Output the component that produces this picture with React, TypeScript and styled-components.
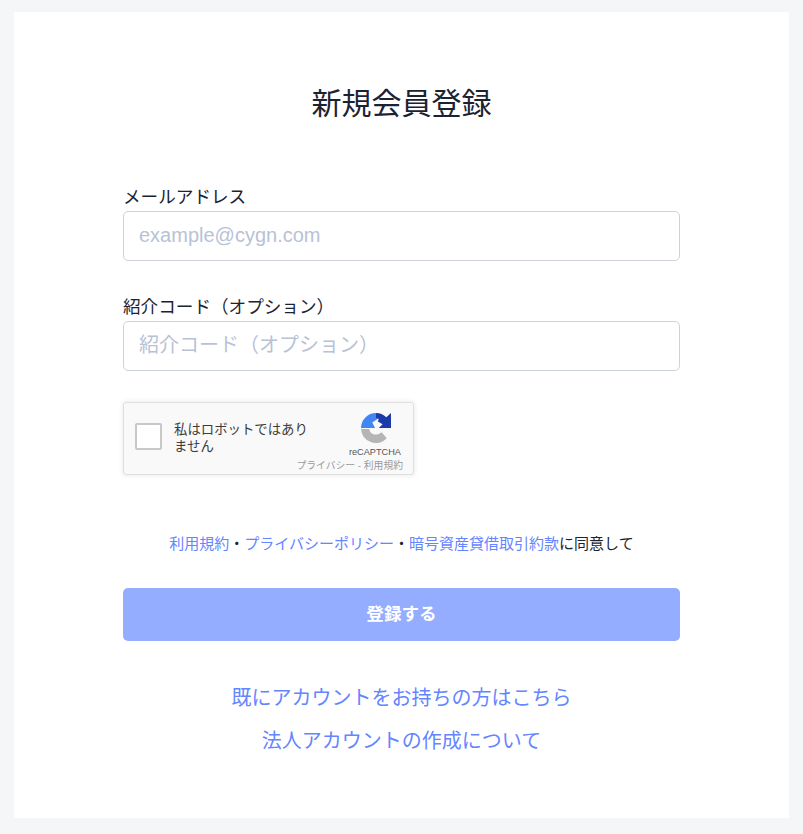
import styled, { createGlobalStyle } from "styled-components";

const GlobalStyle = createGlobalStyle`
  html, body {
    margin: 0;
    padding: 0;
    background: #f5f6f8;
  }
  * {
    box-sizing: border-box;
  }
  body {
    font-family: "Liberation Sans", "Noto Sans CJK JP", sans-serif;
  }
`;

const Page = styled.div`
  width: 803px;
  height: 834px;
  padding: 12px 14px 16px;
`;

const Card = styled.main`
  height: 806px;
  background: #fff;
  padding: 73px 109px 0;
`;

const Title = styled.h1`
  margin: 0 0 62px;
  height: 38px;
  font-size: 30px;
  line-height: 38px;
  font-weight: 400;
  text-align: center;
  color: #1b2333;
`;

const Field = styled.div`
  margin-bottom: 34px;
`;

const Label = styled.label`
  display: block;
  height: 26px;
  font-size: 17.6px;
  line-height: 24px;
  color: #1b2333;
`;

const Input = styled.input`
  display: block;
  width: 100%;
  height: 50px;
  padding: 0 15px 2px;
  border: 1px solid #ccd1dc;
  border-radius: 5px;
  font-family: inherit;
  font-size: 20px;
  color: #1b2333;
  outline: 0;

  &::placeholder {
    color: #b8c2d6;
    opacity: 1;
  }
`;

const Captcha = styled.div`
  position: relative;
  width: 291px;
  height: 73px;
  margin-top: -3px;
  background: #f9f9f9;
  border: 1px solid #dfdfdf;
  border-radius: 3px;
  box-shadow: 0 0 4px 1px rgba(0, 0, 0, 0.07);
  display: flex;
  align-items: flex-start;
  padding: 20px 0 0 11px;
`;

const CaptchaBox = styled.div`
  width: 27px;
  height: 27px;
  background: #fff;
  border: 2px solid #c8c8c8;
  border-radius: 2px;
  flex: none;
`;

const CaptchaText = styled.div`
  width: 140px;
  margin-left: 12px;
  margin-top: -2px;
  font-size: 13.4px;
  line-height: 17px;
  color: #3c3c3c;
`;

const CaptchaBrand = styled.div`
  position: absolute;
  top: 10px;
  right: 12px;
  display: flex;
  flex-direction: column;
  align-items: center;
`;

const LogoIcon = styled.svg`
  margin-left: 3px;
`;

const CaptchaName = styled.span`
  font-size: 9.2px;
  line-height: 12px;
  margin-top: 3px;
  color: #555;
`;

const CaptchaLegal = styled.span`
  position: absolute;
  right: 10px;
  bottom: 2px;
  font-size: 9.8px;
  line-height: 12px;
  color: #999;
`;

const Agreement = styled.p`
  margin: 57px 0 0;
  height: 24px;
  font-size: 15px;
  line-height: 24px;
  text-align: center;
  color: #1b2333;
`;

const Link = styled.a`
  color: #6485ff;
  text-decoration: none;
`;

const Submit = styled.button`
  display: block;
  width: 100%;
  height: 53px;
  margin-top: 32px;
  padding: 0 0 4px;
  border: 0;
  border-radius: 5px;
  background: #94adff;
  color: #fff;
  font-family: inherit;
  font-size: 17.6px;
  font-weight: 700;
`;

const Footer = styled.nav`
  margin-top: 43px;
  display: flex;
  flex-direction: column;
  align-items: center;
  gap: 14px;
`;

const FooterLink = styled(Link)`
  font-size: 20px;
  line-height: 29px;
`;

const RecaptchaLogo = () => (
  <LogoIcon width="30" height="30" viewBox="0 0 64 64" aria-hidden="true">
    <path d="M32 0A32 32 0 0 1 54 9L64 0V32H38L46 24L36 18L38 12H32Z" fill="#1c3aa9" />
    <path d="M32 0V12H36L24 20L30 32H0L8 24L0 32A32 32 0 0 1 32 0Z" fill="#4285f4" />
    <path d="M0 34H18C18 46 34 50 44 41L55 54A32 32 0 0 1 0 34Z" fill="#b5b5b5" />
  </LogoIcon>
);

export default function App() {
  return (
    <>
      <GlobalStyle />
      <Page>
        <Card>
          <Title>新規会員登録</Title>
          <Field>
            <Label>メールアドレス</Label>
            <Input placeholder="example@cygn.com" />
          </Field>
          <Field>
            <Label>紹介コード（オプション）</Label>
            <Input placeholder="紹介コード（オプション）" />
          </Field>
          <Captcha>
            <CaptchaBox />
            <CaptchaText>私はロボットではありません</CaptchaText>
            <CaptchaBrand>
              <RecaptchaLogo />
              <CaptchaName>reCAPTCHA</CaptchaName>
            </CaptchaBrand>
            <CaptchaLegal>プライバシー - 利用規約</CaptchaLegal>
          </Captcha>
          <Agreement>
            <Link>利用規約</Link>・<Link>プライバシーポリシー</Link>・<Link>暗号資産貸借取引約款</Link>に同意して
          </Agreement>
          <Submit>登録する</Submit>
          <Footer>
            <FooterLink>既にアカウントをお持ちの方はこちら</FooterLink>
            <FooterLink>法人アカウントの作成について</FooterLink>
          </Footer>
        </Card>
      </Page>
    </>
  );
}
